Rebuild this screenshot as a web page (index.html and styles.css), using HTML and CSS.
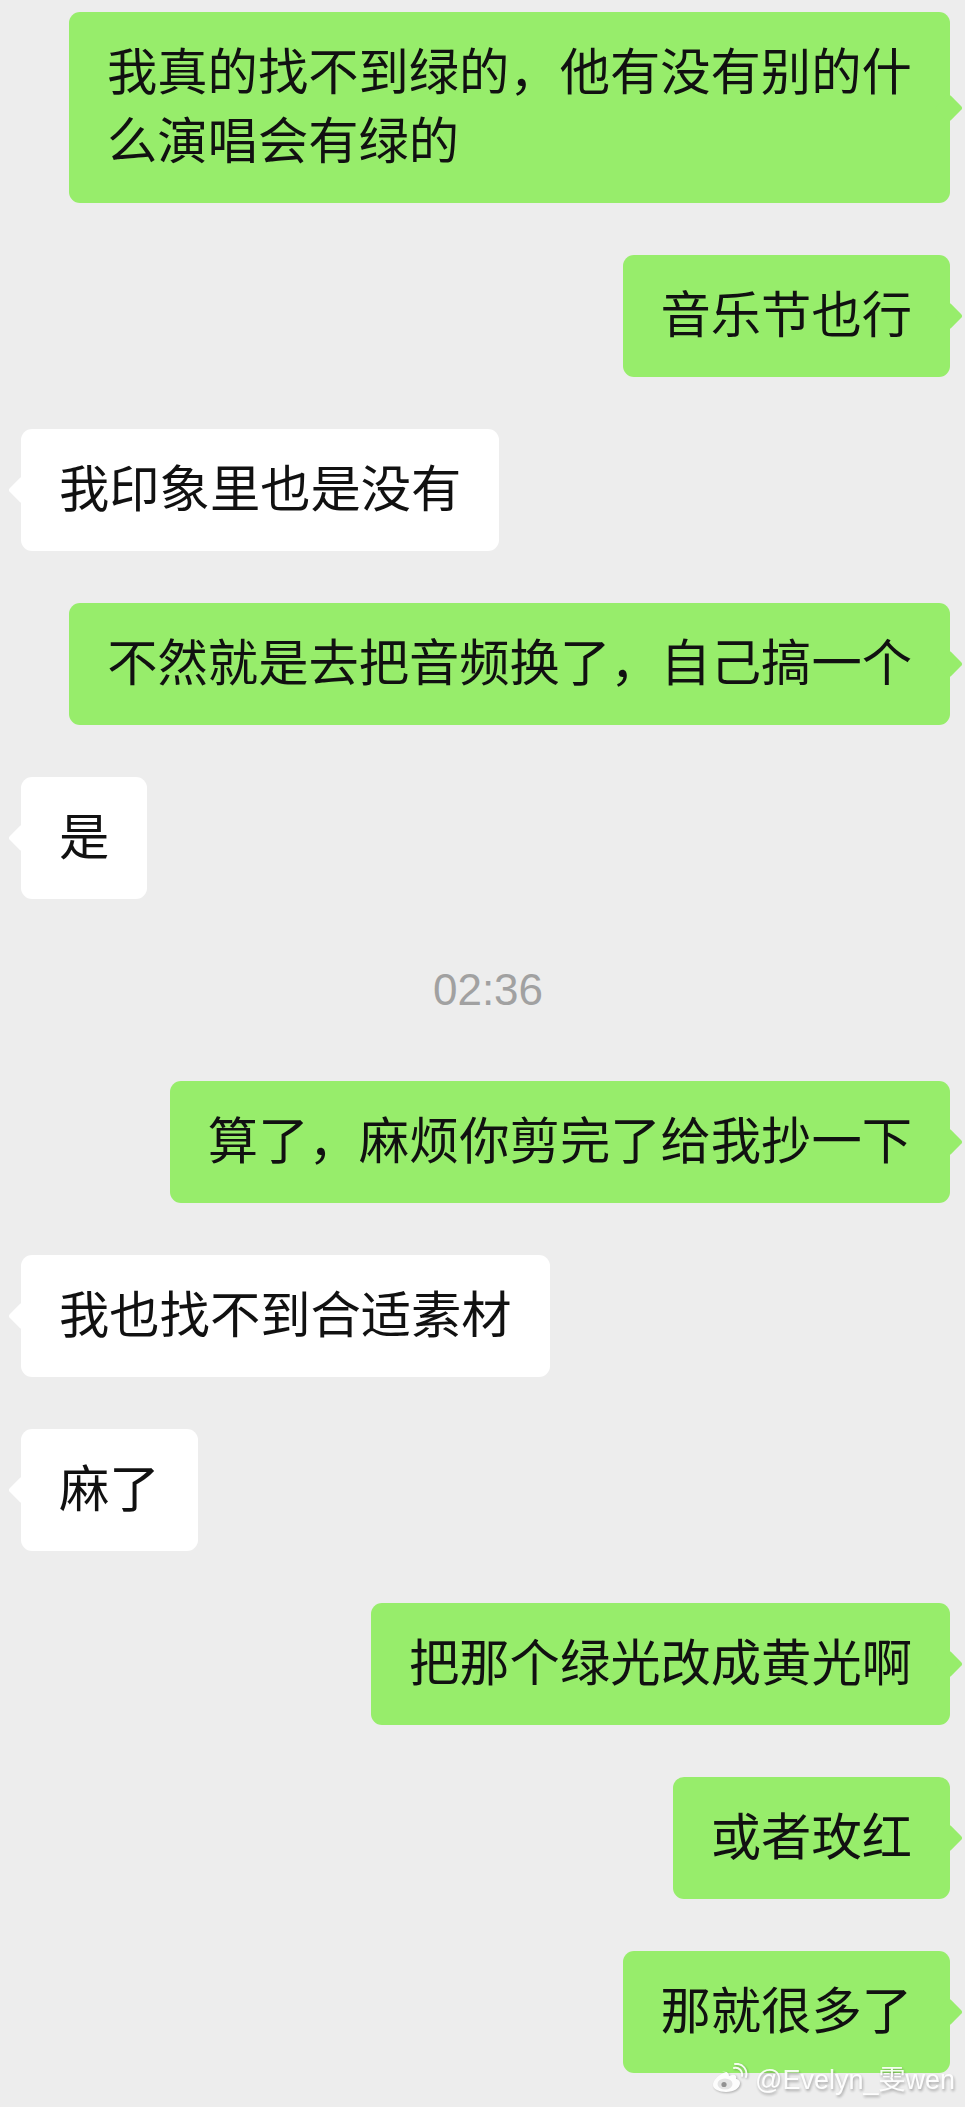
FILE: index.html
```html
<!DOCTYPE html>
<html lang="zh-CN">
<head>
    <meta charset="UTF-8">
    <meta name="viewport" content="width=device-width, initial-scale=1.0">
    <title>聊天记录</title>
    <link rel="stylesheet" href="styles.css">
</head>
<body>
    <main class="chat">
        <p class="bubble me">我真的找不到绿的，他有没有别的什么演唱会有绿的</p>
        <p class="bubble me">音乐节也行</p>
        <p class="bubble them">我印象里也是没有</p>
        <p class="bubble me">不然就是去把音频换了，自己搞一个</p>
        <p class="bubble them">是</p>
        <p class="time">02:36</p>
        <p class="bubble me">算了，麻烦你剪完了给我抄一下</p>
        <p class="bubble them">我也找不到合适素材</p>
        <p class="bubble them">麻了</p>
        <p class="bubble me">把那个绿光改成黄光啊</p>
        <p class="bubble me">或者玫红</p>
        <p class="bubble me">那就很多了</p>
    </main>
    <div class="watermark">
        <svg class="weibo" viewBox="0 0 36 30" width="36" height="30" aria-hidden="true">
            <path d="M14 9C7 11 1 17 1 22c0 4 6 7 13 7 8 0 14-4 14-9 0-3-3-4-4-4 1-3-1-5-4-4l-3 1c0-3-2-5-7-4z" fill="#fff"/>
            <ellipse cx="13" cy="21" rx="7.5" ry="5.5" fill="#e4e4e4"/>
            <circle cx="12" cy="21.500" r="2.600" fill="#888"/>
            <path d="M22 5c5-1 9 3 8 8M23 1c8-1 13 6 11 13" fill="none" stroke="#fff" stroke-width="2" stroke-linecap="round"/>
        </svg>
        <span>@Evelyn_雯wen</span>
    </div>
</body>
</html>
```

FILE: styles.css
```css
html, body {
    margin: 0;
    padding: 0;
}
body {
    position: relative;
    height: 2107px;
    overflow: hidden;
    background-color: #ededed;
    font-family: "Liberation Sans", "Noto Sans CJK SC", sans-serif;
}
.chat {
    display: flex;
    flex-direction: column;
    align-items: flex-start;
    gap: 52px;
    padding: 12px 15px 0 21px;
}
.bubble {
    position: relative;
    box-sizing: border-box;
    max-width: 881px;
    margin: 0;
    padding: 26px 38px 27px;
    border-radius: 11px;
    font-size: 50.3px;
    line-height: 69px;
    color: #111;
}
.bubble::after {
    content: "";
    position: absolute;
    top: 50%;
    width: 20px;
    height: 20px;
    margin-top: -10px;
    border-radius: 3px;
    background-color: inherit;
    transform: rotate(45deg);
}
.me {
    align-self: flex-end;
    background-color: #97ed6b;
}
.me::after {
    right: -9px;
}
.them {
    background-color: #fff;
}
.them::after {
    left: -9px;
}
.time {
    align-self: center;
    margin: -1px 0 -1px 5px;
    font-size: 44px;
    line-height: 80px;
    color: #a1a1a1;
}
.watermark {
    position: absolute;
    right: 10px;
    bottom: 10px;
    display: flex;
    align-items: center;
    gap: 7px;
    font-size: 27px;
    color: #fff;
    text-shadow: 1px 2px 3px rgba(0, 0, 0, 0.35);
    opacity: 0.9;
}
.weibo {
    filter: drop-shadow(1px 1px 1px rgba(0, 0, 0, 0.3));
}
```
